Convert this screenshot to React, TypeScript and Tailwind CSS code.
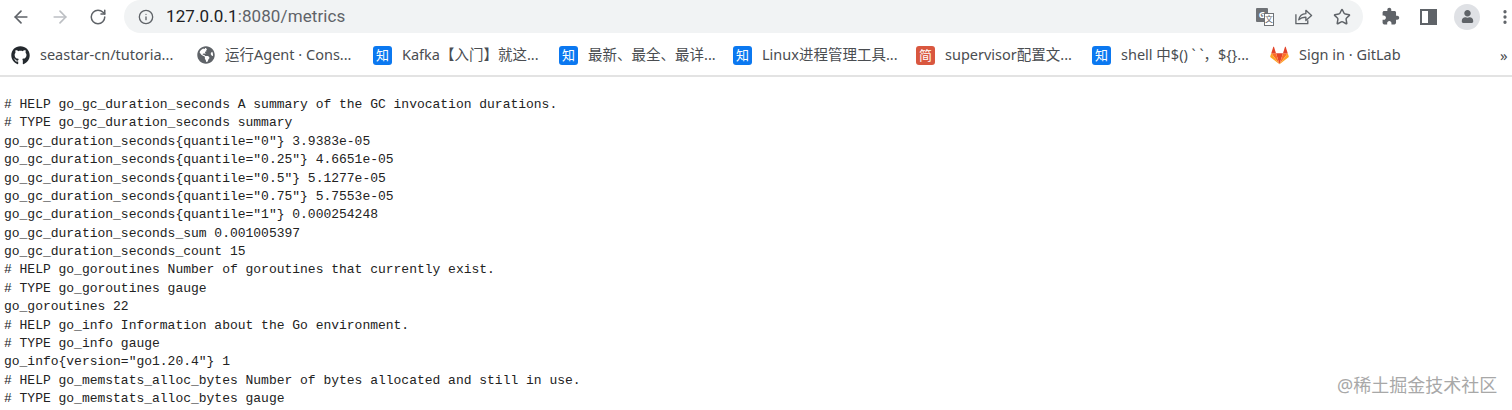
import { ArrowLeft, ArrowRight, RotateCw, Info, Star, MoreVertical } from "lucide-react";
import { FaGithub, FaGlobeAmericas, FaUser } from "react-icons/fa";

const lines = [
  "# HELP go_gc_duration_seconds A summary of the GC invocation durations.",
  "# TYPE go_gc_duration_seconds summary",
  'go_gc_duration_seconds{quantile="0"} 3.9383e-05',
  'go_gc_duration_seconds{quantile="0.25"} 4.6651e-05',
  'go_gc_duration_seconds{quantile="0.5"} 5.1277e-05',
  'go_gc_duration_seconds{quantile="0.75"} 5.7553e-05',
  'go_gc_duration_seconds{quantile="1"} 0.000254248',
  "go_gc_duration_seconds_sum 0.001005397",
  "go_gc_duration_seconds_count 15",
  "# HELP go_goroutines Number of goroutines that currently exist.",
  "# TYPE go_goroutines gauge",
  "go_goroutines 22",
  "# HELP go_info Information about the Go environment.",
  "# TYPE go_info gauge",
  'go_info{version="go1.20.4"} 1',
  "# HELP go_memstats_alloc_bytes Number of bytes allocated and still in use.",
  "# TYPE go_memstats_alloc_bytes gauge",
];

function Zhi({ red }: { red?: boolean }) {
  return (
    <span
      className={`flex h-[19px] w-[19px] shrink-0 items-center justify-center rounded-[3px] text-[13px] leading-none text-white ${
        red ? "bg-[#d9573f]" : "bg-[#0b78f0]"
      }`}
    >
      {red ? "简" : "知"}
    </span>
  );
}

function GitlabLogo() {
  return (
    <svg viewBox="0 0 24 23" width="19" height="19" className="shrink-0">
      <path d="M12 22.5 16.4 8.5H7.6Z" fill="#e24329" />
      <path d="M12 22.5 7.6 8.5H1.6Z" fill="#fc6d26" />
      <path d="M12 22.5 22.4 8.5H16.4Z" fill="#fc6d26" />
      <path d="M1.6 8.5.3 12.6c-.1.4 0 .8.3 1L12 22.5Z" fill="#fca326" />
      <path d="M22.4 8.5 23.7 12.6c.1.4 0 .8-.3 1L12 22.5Z" fill="#fca326" />
      <path d="M1.6 8.5H7.6L5 .6c-.1-.4-.7-.4-.8 0Z" fill="#e24329" />
      <path d="M22.4 8.5H16.4L19 .6c.1-.4.7-.4.8 0Z" fill="#e24329" />
    </svg>
  );
}

function Mark({ icon, text, width }: { icon: React.ReactNode; text: string; width: string }) {
  return (
    <div className={`flex shrink-0 items-center gap-[10px] ${width}`}>
      {icon}
      <span className="whitespace-nowrap text-[14.5px] text-[#4a4d51]">{text}</span>
    </div>
  );
}

export default function App() {
  return (
    <div className="relative h-[410px] w-[1512px] overflow-hidden bg-white font-['Noto_Sans','Noto_Sans_CJK_SC',sans-serif]">
      {/* toolbar */}
      <div className="flex h-[33px] items-center pl-[11px]">
        <ArrowLeft size={20} strokeWidth={2} className="shrink-0 text-[#5f6368]" />
        <ArrowRight size={20} strokeWidth={2} className="ml-[19px] shrink-0 text-[#bcbfc3]" />
        <RotateCw size={18} strokeWidth={2} className="ml-[19px] shrink-0 text-[#5f6368]" />
        <div className="ml-[17px] flex h-[33px] w-[1239px] shrink-0 items-center rounded-[17px] bg-[#f1f3f4] pl-[14px] pr-[12px]">
          <Info size={16} strokeWidth={2} className="text-[#5f6368]" />
          <span className="ml-[12px] font-['Roboto',sans-serif] text-[17px] tracking-[0.1px] text-[#202124]">
            127.0.0.1<span className="text-[#5f6368]">:8080/metrics</span>
          </span>
          <div className="ml-auto flex items-center gap-[20px]">
            <span className="relative block h-[18px] w-[18px]">
              <span className="absolute left-0 top-0 flex h-[14px] w-[12px] items-center justify-center rounded-[1px] bg-[#6f7276] text-[9px] font-bold leading-none text-white">
                G
              </span>
              <span className="absolute bottom-0 right-0 flex h-[13px] w-[10px] items-center justify-center border border-[#6f7276] bg-white text-[8px] leading-none text-[#5f6368]">
                文
              </span>
            </span>
            <svg viewBox="0 0 20 20" width="19" height="19" fill="none" stroke="#5f6368" strokeWidth="1.4" strokeLinejoin="round">
              <path d="M2 7.5V17.5H14.5V14" />
              <path d="M5 13.5c.8-4 3.6-6.3 7.5-6.5V3.5L18.5 9l-6 5.2V10.8c-3-.2-5.4.7-7.5 2.7Z" />
            </svg>
            <Star size={18} strokeWidth={2} className="text-[#5f6368]" />
          </div>
        </div>
        <div className="ml-[18px] flex shrink-0 items-center">
          <svg viewBox="0 0 24 24" width="19" height="19" fill="#5f6368">
            <path d="M20.5 11H19V7c0-1.1-.9-2-2-2h-4V3.5C13 2.12 11.88 1 10.5 1S8 2.12 8 3.5V5H4c-1.1 0-1.99.9-1.99 2v3.8H3.5c1.49 0 2.7 1.21 2.7 2.7s-1.21 2.7-2.7 2.7H2V20c0 1.1.9 2 2 2h3.8v-1.5c0-1.49 1.21-2.7 2.7-2.7 1.49 0 2.7 1.21 2.7 2.7V22H17c1.1 0 2-.9 2-2v-4h1.5c1.38 0 2.5-1.12 2.5-2.5S21.88 11 20.5 11z" />
          </svg>
          <span className="ml-[20px] flex h-[16px] w-[17px] justify-end border-2 border-[#5f6368]">
            <span className="h-full w-[7px] bg-[#5f6368]" />
          </span>
          <span className="ml-[17px] flex h-[26px] w-[26px] items-center justify-center rounded-full bg-[#dfe1e5]">
            <FaUser size={13} className="text-[#5f6368]" />
          </span>
          <MoreVertical size={18} strokeWidth={2.4} className="ml-[16px] text-[#5f6368]" />
        </div>
      </div>

      {/* bookmarks */}
      <div className="flex h-[44px] items-center border-b-2 border-[#e3e3e3] pl-[11px] pt-[2px]">
        <Mark width="w-[186px]" icon={<FaGithub size={19} className="shrink-0 text-[#24292e]" />} text="seastar-cn/tutoria..." />
        <Mark width="w-[176px]" icon={<FaGlobeAmericas size={18} className="shrink-0 text-[#5f6368]" />} text="运行Agent · Cons..." />
        <Mark width="w-[186px]" icon={<Zhi />} text="Kafka【入门】就这..." />
        <Mark width="w-[174px]" icon={<Zhi />} text="最新、最全、最详..." />
        <Mark width="w-[183px]" icon={<Zhi />} text="Linux进程管理工具..." />
        <Mark width="w-[176px]" icon={<Zhi red />} text="supervisor配置文..." />
        <Mark width="w-[178px]" icon={<Zhi />} text="shell 中$() ` `，${}..." />
        <Mark width="w-[230px]" icon={<GitlabLogo />} text="Sign in · GitLab" />
        <span className="text-[15px] text-[#4a4d51]">»</span>
      </div>

      {/* metrics */}
      <pre className="whitespace-pre pl-[4px] pt-[19px] font-['Liberation_Mono','Noto_Sans_CJK_SC',monospace] text-[13px] leading-[18.375px] tracking-[-0.01px] text-[#222]">
        {lines.join("\n")}
      </pre>

      {/* watermark */}
      <div className="absolute left-[1337px] top-[374px] text-[18px] leading-[22px] text-[#a8a8a8]">
        @稀土掘金技术社区
      </div>
    </div>
  );
}
